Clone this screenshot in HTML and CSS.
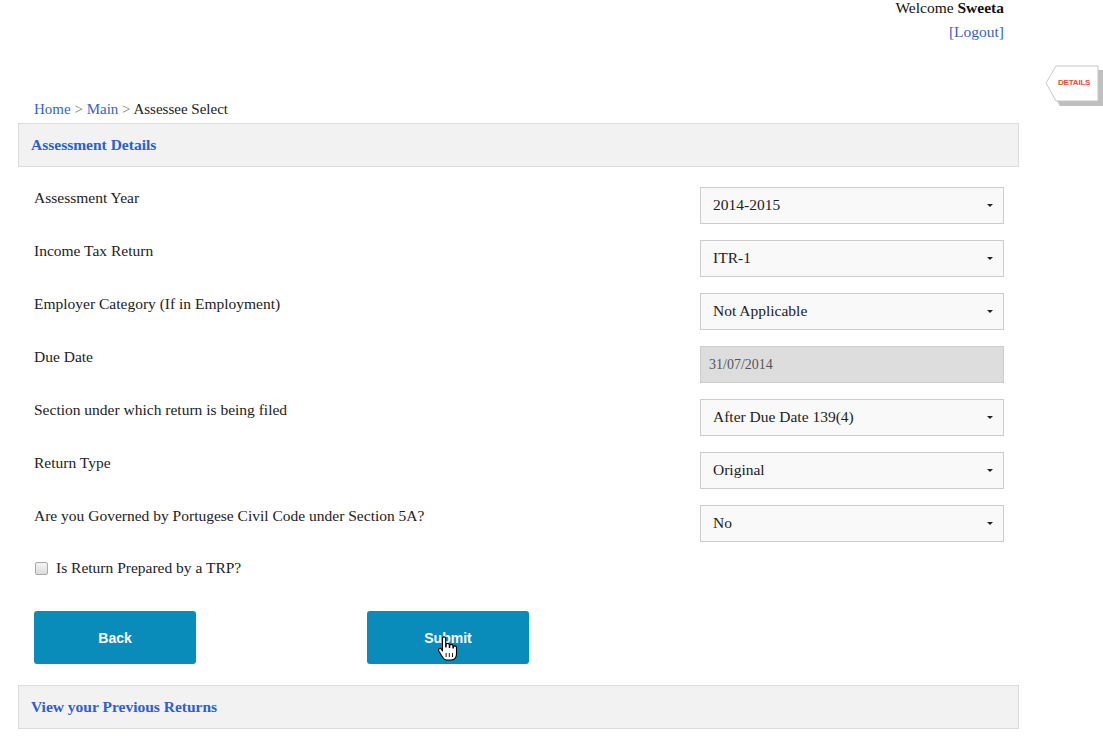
FILE: index.html
```html
<!DOCTYPE html>
<html>
<head>
<meta charset="utf-8">
<link rel="stylesheet" href="styles.css">
</head>
<body>
<div class="page">
  <div class="header">
    <div>Welcome <b>Sweeta</b></div>
    <div><a class="link" href="#">[Logout]</a></div>
  </div>

  <div class="details-tab">
    <svg width="60" height="42" viewBox="0 0 60 42">
      <polygon points="15,5 58,5 58,41 15,41 5,23" fill="#8a8a8a" opacity="0.55"/>
      <polygon points="11,1 53,1 53,36 11,36 1,18" fill="#fff" stroke="#c8c8c8" stroke-width="1"/>
    </svg>
    <span class="details-text">DETAILS</span>
  </div>

  <div class="breadcrumb">
    <a class="link" href="#">Home</a> <span class="sep">&gt;</span> <a class="link" href="#">Main</a> <span class="sep">&gt;</span> Assessee Select
  </div>

  <div class="panel">Assessment Details</div>

  <div class="form">
    <div class="row">
      <div class="label">Assessment Year</div>
      <div class="select">2014-2015<span class="caret"></span></div>
    </div>
    <div class="row">
      <div class="label">Income Tax Return</div>
      <div class="select">ITR-1<span class="caret"></span></div>
    </div>
    <div class="row">
      <div class="label">Employer Category (If in Employment)</div>
      <div class="select">Not Applicable<span class="caret"></span></div>
    </div>
    <div class="row">
      <div class="label">Due Date</div>
      <div class="select disabled">31/07/2014</div>
    </div>
    <div class="row">
      <div class="label">Section under which return is being filed</div>
      <div class="select">After Due Date 139(4)<span class="caret"></span></div>
    </div>
    <div class="row">
      <div class="label">Return Type</div>
      <div class="select">Original<span class="caret"></span></div>
    </div>
    <div class="row">
      <div class="label">Are you Governed by Portugese Civil Code under Section 5A?</div>
      <div class="select">No<span class="caret"></span></div>
    </div>

    <div class="check-row">
      <span class="checkbox"></span>
      <span>Is Return Prepared by a TRP?</span>
    </div>

    <div class="buttons">
      <div class="btn">Back</div>
      <div class="btn btn-submit">Submit
        <svg class="cursor" width="20" height="28" viewBox="0 0 20 26">
          <path d="M5.5,2.5 a1.6,1.6 0 0 1 3.2,0 V11 h0.4 V9 a1.6,1.6 0 0 1 3.2,0 V11.5 h0.4 V10 a1.6,1.6 0 0 1 3.2,0 V12 h0.4 V11.5 a1.6,1.6 0 0 1 3.2,0 V18 c0,3.5 -2.2,6 -5.5,6 H10 c-2.2,0 -3.300,-1 -4.4,-2.8 L1.8,15 a1.6,1.6 0 0 1 2.7,-1.8 L5.5,15 Z" fill="#fff" stroke="#000" stroke-width="1.1" stroke-linejoin="round"/>
          <path d="M9.1,17 V21 M12.3,17 V21 M15.5,17 V21" stroke="#000" stroke-width="0.9"/>
        </svg>
      </div>
    </div>
  </div>

  <div class="panel panel-bottom">View your Previous Returns</div>
</div>
</body>
</html>
```

FILE: styles.css
```css
html, body {
  margin: 0;
  padding: 0;
  background: #fff;
}

body {
  font-family: "Liberation Serif", "Times New Roman", serif;
  font-size: 15.5px;
  color: #222;
}

.page {
  position: relative;
  width: 1103px;
  height: 751px;
  overflow: hidden;
  padding-left: 18px;
  box-sizing: border-box;
}

.link {
  color: #3763c6;
  text-decoration: none;
}

.header {
  width: 986px;
  text-align: right;
  line-height: 24px;
  margin-top: -4px;
  color: #111;
}

.details-tab {
  position: absolute;
  left: 1045px;
  top: 65px;
  width: 60px;
  height: 42px;
}

.details-tab svg {
  display: block;
}

.details-text {
  position: absolute;
  left: 13px;
  top: 13px;
  font-family: "Liberation Sans", Arial, sans-serif;
  font-size: 8px;
  font-weight: bold;
  color: #f04a3a;
  letter-spacing: -0.2px;
}

.breadcrumb {
  margin-top: 55px;
  margin-bottom: 4px;
  padding-left: 16px;
  line-height: 20px;
  font-size: 15px;
  color: #222;
}

.sep {
  color: #777;
}

.panel {
  width: 1001px;
  height: 44px;
  box-sizing: border-box;
  background: #f2f2f2;
  border: 1px solid #dcdcdc;
  padding-left: 12px;
  line-height: 42px;
  font-weight: bold;
  color: #2d5ed2;
}

.form {
  width: 1001px;
  box-sizing: border-box;
  padding: 20px 15px 0 16px;
}

.row {
  display: flex;
  justify-content: space-between;
  align-items: flex-start;
  height: 37px;
  margin-bottom: 16px;
}

.label {
  line-height: 20px;
  padding-top: 1px;
}

.select {
  position: relative;
  flex: none;
  width: 304px;
  height: 37px;
  box-sizing: border-box;
  border: 1px solid #cccccc;
  background: #f9f9f9;
  padding-left: 12px;
  line-height: 33px;
  color: #222;
}

.select.disabled {
  background: #dddddd;
  padding-left: 8px;
  color: #555;
  font-size: 14px;
  line-height: 35px;
}

.caret {
  position: absolute;
  right: 10px;
  top: 16px;
  width: 0;
  height: 0;
  border-left: 3px solid transparent;
  border-right: 3px solid transparent;
  border-top: 3px solid #222;
}

.check-row {
  display: flex;
  align-items: center;
  gap: 8px;
  margin-top: 2px;
  line-height: 20px;
  padding-left: 1px;
}

.checkbox {
  display: inline-block;
  width: 11px;
  height: 11px;
  border: 1px solid #a9a9a9;
  border-radius: 2px;
  background: linear-gradient(#f4f4f4, #dcdcdc);
}

.buttons {
  display: flex;
  gap: 171px;
  margin-top: 33px;
  margin-bottom: 21px;
}

.btn {
  position: relative;
  width: 162px;
  height: 53px;
  background: #0a8cbb;
  border-radius: 3px;
  color: #fff;
  font-family: "Liberation Sans", Arial, sans-serif;
  font-weight: bold;
  font-size: 14px;
  display: flex;
  align-items: center;
  justify-content: center;
}

.cursor {
  position: absolute;
  left: 70px;
  top: 24px;
}

.panel-bottom {
  height: 44px;
}
```
